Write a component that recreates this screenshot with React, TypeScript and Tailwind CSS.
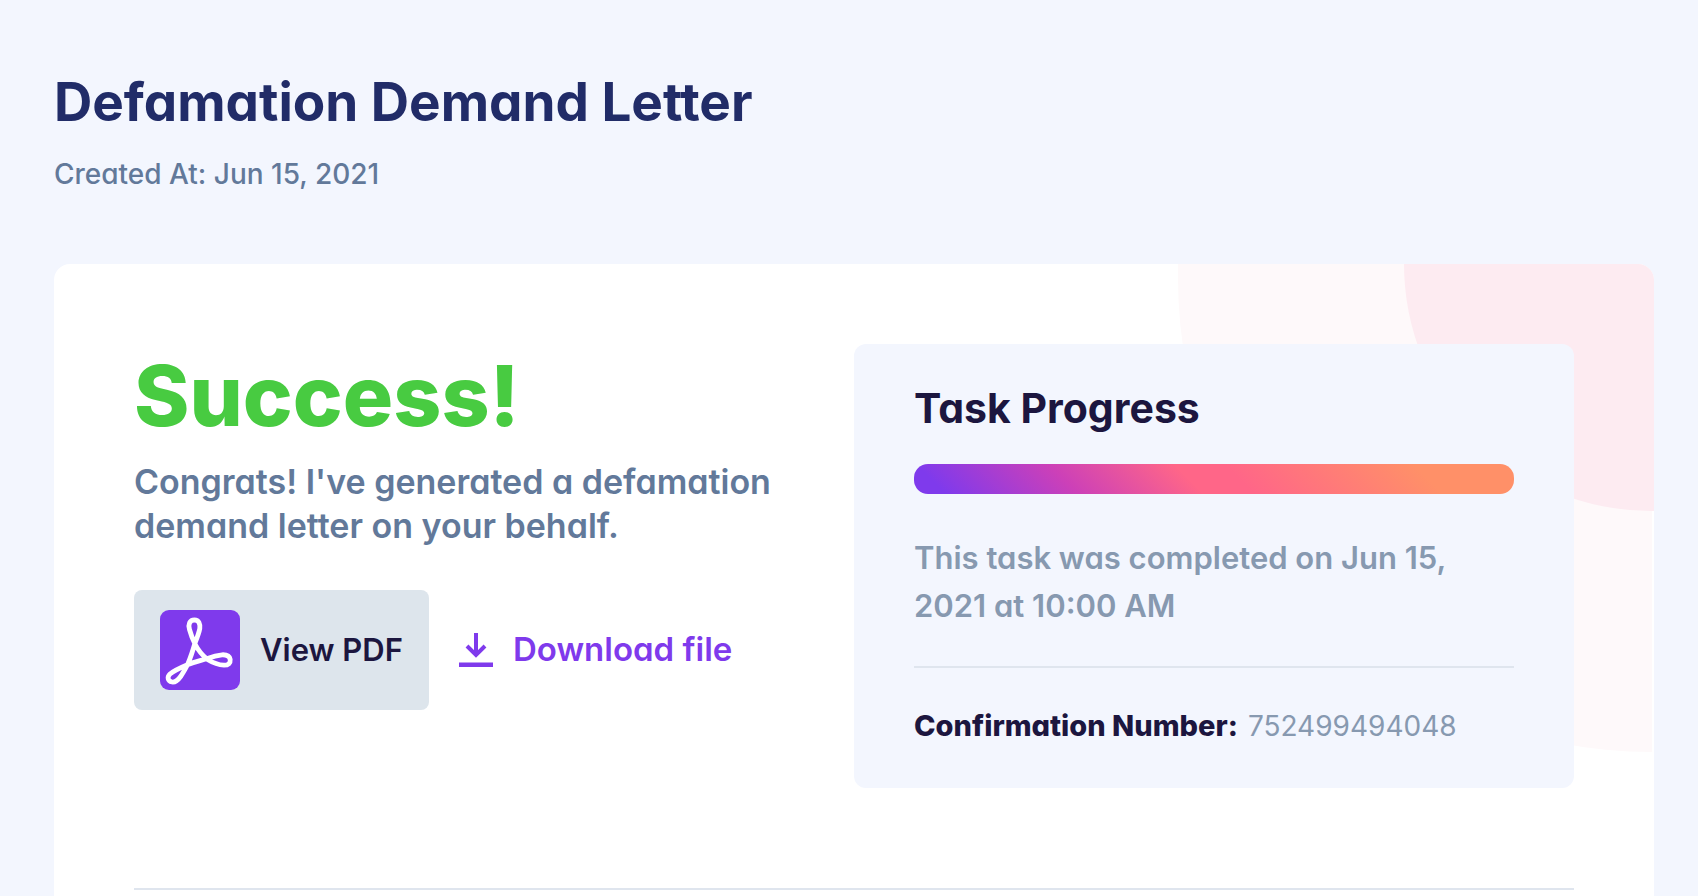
function AcrobatIcon() {
  return (
    <svg viewBox="0 0 80 80" className="size-20 shrink-0" aria-hidden="true">
      <rect width="80" height="80" rx="9" fill="#7f3aec" />
      <path
        d="M34.5 10C29.5 10 28 14.5 29.5 19.5C31 25 33 30 35 34C38 40 42 45 47.5 49.5C54 53.5 59 55 64 55.2C68.5 55.2 70.6 53 70.2 49.5C69.5 45.5 66 44.6 62 44.8C57 45.2 52 46.7 47.5 48.5C41 50.5 34 52 28 54.5C21 57.5 14 60.5 10 64C7 67 7.5 71 12 72C16 72.7 18.5 69.5 21 66C23.5 62 26 58 28 53.5C31 46.5 33 40 35 33C37 28 39 23 39.8 18.5C40.3 14 39 10 34.5 10Z"
        fill="none"
        stroke="#fff"
        strokeWidth="4.8"
        strokeLinejoin="round"
      />
    </svg>
  );
}

function DownloadIcon() {
  return (
    <svg viewBox="0 0 34 34" className="size-[34px] shrink-0" fill="none" stroke="currentColor" aria-hidden="true">
      <path d="M17 0V22M8 13L17 22L26 13" strokeWidth="4" />
      <path d="M0 31.8H34" strokeWidth="4.4" />
    </svg>
  );
}

function CornerCircles() {
  return (
    <svg viewBox="0 0 476 488" className="pointer-events-none absolute top-0 right-0 h-[488px] w-[476px]" aria-hidden="true">
      <path d="M0 0V14A474 474 0 0 0 474 488V0Z" fill="#fef9fa" />
      <path d="M226 0A247 247 0 0 0 473 247H476V0Z" fill="#fdebf1" />
    </svg>
  );
}

export default function App() {
  return (
    <main className="flex min-h-screen flex-col bg-[#f3f6fe] pt-[72px] pr-11 pl-[54px] font-['Inter',sans-serif] [font-feature-settings:'cv11']">
      <header>
        <h1 className="text-[53px] leading-[60px] font-bold text-[#212c68]">Defamation Demand Letter</h1>
        <p className="mt-[22px] text-[28px] leading-10 font-medium text-[#62799a]">Created At: Jun 15, 2021</p>
      </header>

      <section className="relative mt-[70px] grow overflow-hidden rounded-t-2xl bg-white px-20 pt-20">
        <CornerCircles />
        <div className="relative grid grid-cols-2">
          <div>
            <h2 className="text-[84px] leading-[104px] font-extrabold text-[#48cb41]">Success!</h2>
            <p className="mt-3 text-[34px] leading-[44px] font-semibold text-[#62799a]">
              Congrats! I've generated a defamation
              <br />
              demand letter on your behalf.
            </p>
            <div className="mt-[42px] flex items-center gap-[30px]">
              <button
                type="button"
                className="flex h-[120px] items-center gap-5 rounded-lg bg-[#dde5ec] px-[26px] text-[31px] font-semibold whitespace-nowrap text-[#1c163f]"
              >
                <AcrobatIcon />
                View PDF
              </button>
              <a href="#download" className="flex items-center gap-5 text-[33px] font-semibold whitespace-nowrap text-[#7f3aec]">
                <DownloadIcon />
                Download file
              </a>
            </div>
          </div>

          <aside className="rounded-xl bg-[#f3f6fe] px-[60px] pt-10 pb-[42px]">
            <h3 className="text-[41px] leading-[48px] font-bold text-[#1c163f]">Task Progress</h3>
            <div
              role="progressbar"
              aria-label="Task Progress"
              aria-valuenow={100}
              aria-valuemin={0}
              aria-valuemax={100}
              className="mt-8 h-[30px] rounded-[14px] bg-[linear-gradient(45deg,#7f3aec_5%,#cc40b8_26%,#ff6688_46%,#ff6688_54%,#ff9068_84%)]"
            />
            <p className="mt-10 text-[31px] leading-[48px] font-semibold text-[#8799b0]">
              This task was completed on Jun 15,
              <br />
              2021 at 10:00 AM
            </p>
            <hr className="mt-9 border-t-2 border-[#dfe5ee]" />
            <p className="mt-[38px] flex gap-2.5 text-[28px] leading-10 text-[#8799b0]">
              <strong className="text-[29px] font-extrabold text-[#1c163f]">Confirmation Number:</strong>
              <span>752499494048</span>
            </p>
          </aside>
        </div>
        <hr className="relative mt-[100px] border-t-2 border-[#dfe5ee]" />
      </section>
    </main>
  );
}
